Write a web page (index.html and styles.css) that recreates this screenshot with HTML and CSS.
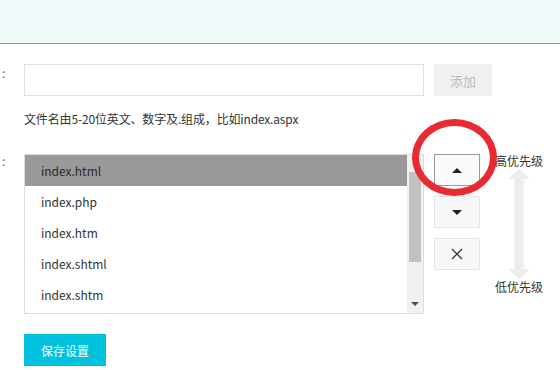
FILE: index.html
```html
<!DOCTYPE html>
<html lang="zh-CN">
<head>
<meta charset="utf-8">
<link rel="stylesheet" href="styles.css">
</head>
<body>
<header class="topbar"></header>
<main class="form">
  <div class="row">
    <div class="label">:</div>
    <input class="text-input" type="text">
    <button class="add-btn">添加</button>
  </div>
  <div class="hint-row">
    <div class="label"></div>
    <p class="hint">文件名由5-20位英文、数字及.组成，比如index.aspx</p>
  </div>
  <div class="row list-row">
    <div class="label label-list">:</div>
    <div class="listbox">
      <ul class="items">
        <li class="item selected">index.html</li>
        <li class="item">index.php</li>
        <li class="item">index.htm</li>
        <li class="item">index.shtml</li>
        <li class="item">index.shtm</li>
      </ul>
      <div class="scrollbar">
        <span class="sb-up"></span>
        <span class="sb-thumb"></span>
        <span class="sb-down"></span>
      </div>
    </div>
    <div class="ops">
      <button class="op op-focus"><span class="tri-up"></span></button>
      <button class="op"><span class="tri-down"></span></button>
      <button class="op op-x">
        <svg width="12" height="12" viewBox="0 0 12 12"><path d="M1 1L11 11M11 1L1 11" stroke="#333" stroke-width="1.3" fill="none"/></svg>
      </button>
      <span class="mark"></span>
    </div>
    <div class="priority">
      <span class="prio-text">高优先级</span>
      <svg class="prio-arrow" width="24" height="110" viewBox="0 0 24 110">
        <path d="M12 0L23 10H16.5V100H23L12 110L1 100H7.5V10H1Z" fill="#ededed"/>
      </svg>
      <span class="prio-text">低优先级</span>
    </div>
  </div>
  <div class="row save-row">
    <div class="label"></div>
    <button class="save-btn">保存设置</button>
  </div>
</main>
</body>
</html>
```
FILE: styles.css
```css
* { box-sizing: border-box; }
html, body { margin: 0; padding: 0; }
body {
  width: 560px;
  height: 370px;
  overflow: hidden;
  background: #fff;
  font-family: "Noto Sans CJK SC", "Open Sans", sans-serif;
  font-size: 12px;
  color: #333;
}
.topbar {
  height: 44px;
  background: linear-gradient(#f0f9fd, #f0fbf9);
  border-bottom: 1px solid #4fb2b9;
}
.form { padding-top: 20px; }
.row { display: flex; align-items: flex-start; }
.label {
  width: 24px;
  flex: none;
  padding-left: 2px;
  line-height: 18px;
  color: #666;
}
.label-list { line-height: 14px; }
.text-input {
  width: 400px;
  height: 32px;
  border: 1px solid #e1e1e1;
  margin: 0;
  padding: 0 8px;
  outline: none;
}
.add-btn {
  width: 58px;
  height: 32px;
  margin-left: 10px;
  border: none;
  background: #f0f0f0;
  color: #bbb;
  font: inherit;
  font-size: 13px;
  padding: 0;
}
.hint-row { display: flex; margin-top: 8px; }
.hint { margin: 0; line-height: 30px; color: #333; letter-spacing: -0.15px; }
.list-row { margin-top: 20px; }
.listbox {
  width: 400px;
  height: 160px;
  border: 1px solid #dddddd;
  display: flex;
  overflow: hidden;
}
.items {
  list-style: none;
  margin: 0;
  padding: 0;
  flex: 1;
}
.item {
  height: 31px;
  line-height: 31px;
  padding-left: 16px;
  color: #333;
}
.item.selected { background: #999999; color: #2b2b2b; }
.scrollbar {
  width: 16px;
  flex: none;
  background: #f1f1f1;
  display: flex;
  flex-direction: column;
  align-items: center;
  position: relative;
}
.sb-up {
  margin-top: 3px;
  width: 0; height: 0;
  border-left: 3px solid transparent;
  border-right: 3px solid transparent;
  border-bottom: 3px solid #d0d0d0;
}
.sb-thumb {
  margin-top: 11px;
  width: 12px;
  height: 90px;
  background: #c1c1c1;
}
.sb-down {
  margin-top: auto;
  margin-bottom: 7px;
  width: 0; height: 0;
  border-left: 4px solid transparent;
  border-right: 4px solid transparent;
  border-top: 4px solid #505050;
}
.ops {
  position: relative;
  margin-left: 10px;
  width: 46px;
  display: flex;
  flex-direction: column;
  gap: 10px;
}
.op {
  width: 46px;
  height: 32px;
  border: 1px solid #e6e6e6;
  background: #f8f8f8;
  padding: 0;
  display: flex;
  align-items: center;
  justify-content: center;
}
.op-focus { border-color: #9a9a9a; background: #fafafa; }
.tri-up {
  width: 0; height: 0;
  border-left: 5px solid transparent;
  border-right: 5px solid transparent;
  border-bottom: 5px solid #222;
}
.tri-down {
  width: 0; height: 0;
  border-left: 5px solid transparent;
  border-right: 5px solid transparent;
  border-top: 5px solid #222;
}
.op-x svg { display: block; }
.mark {
  position: absolute;
  left: -22px;
  top: -35px;
  width: 85px;
  height: 77px;
  border: 7px solid #ea2a33;
  border-radius: 50%;
  pointer-events: none;
}
.priority {
  margin-left: 14px;
  width: 50px;
  display: flex;
  flex-direction: column;
  align-items: center;
}
.prio-text { line-height: 14px; color: #333; white-space: nowrap; }
.prio-arrow { display: block; margin: 1px 0 1px 0; }
.save-row { margin-top: 20px; }
.save-btn {
  width: 82px;
  height: 32px;
  border: none;
  background: #00c1de;
  color: #fff;
  font: inherit;
  font-size: 12px;
  padding: 0;
}
```
